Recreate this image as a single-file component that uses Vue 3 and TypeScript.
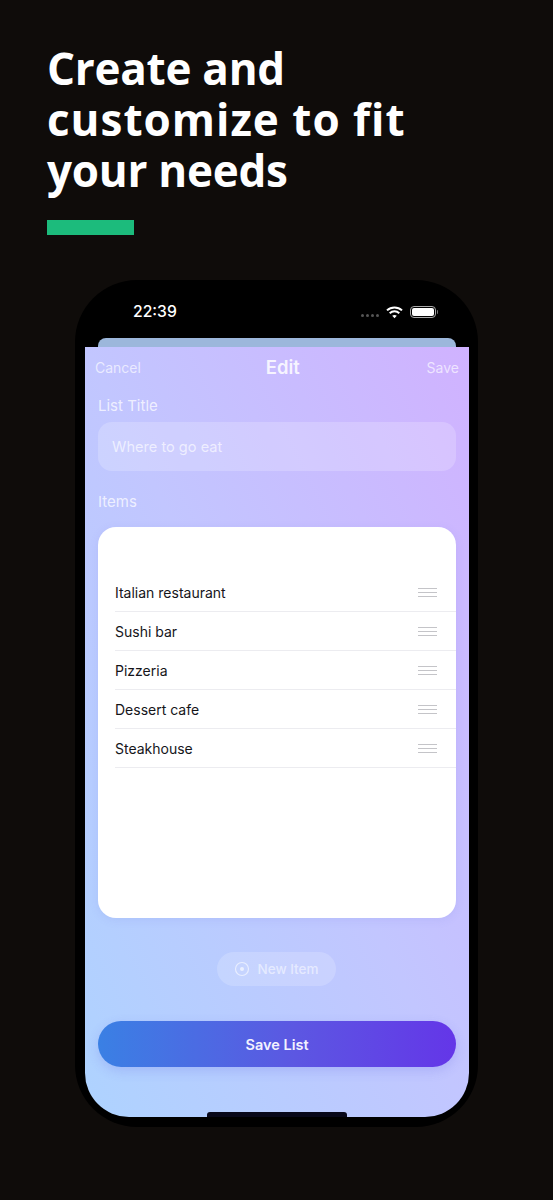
<script setup lang="ts">
const items: string[] = ['Italian restaurant', 'Sushi bar', 'Pizzeria', 'Dessert cafe', 'Steakhouse']
</script>

<template>
  <main class="page">
    <header class="intro">
      <h1 class="headline">
        <span class="line tight">Create and</span>
        <span class="line wide">customize to fit</span>
        <span class="line tight">your needs</span>
      </h1>
      <div class="accent"></div>
    </header>

    <section class="phone">
      <div class="status">
        <span class="time">22:39</span>
        <div class="status-icons">
          <span class="signal"><i></i><i></i><i></i><i></i></span>
          <svg class="wifi" width="17" height="13" viewBox="0 0 17 13" fill="none">
            <path d="M1 4.4C5.2 .4 11.8 .4 16 4.4" stroke="#fff" stroke-width="2" />
            <path d="M3.7 7.2C6.4 4.7 10.6 4.7 13.3 7.2" stroke="#fff" stroke-width="2" />
            <path d="M6.2 9.7 8.5 12.2 10.8 9.7C9.5 8.6 7.5 8.6 6.2 9.7Z" fill="#fff" />
          </svg>
          <span class="battery"><b></b></span>
        </div>
      </div>
      <div class="back-sheet"></div>

      <div class="screen">
        <nav class="nav">
          <span class="nav-side">Cancel</span>
          <span class="nav-title">Edit</span>
          <span class="nav-side">Save</span>
        </nav>

        <div class="content">
          <label class="field-label title-label">List Title</label>
          <div class="input">Where to go eat</div>
          <label class="field-label items-label">Items</label>

          <div class="card">
            <div v-for="item in items" :key="item" class="row">
              <span>{{ item }}</span>
              <span class="grip"><i></i><i></i><i></i></span>
            </div>
          </div>

          <div class="new-wrap">
            <div class="new-item">
              <svg width="16" height="16" viewBox="0 0 16 16" fill="none">
                <circle cx="8" cy="8" r="6.5" stroke="rgba(255,255,255,.6)" stroke-width="1.2" />
                <circle cx="8" cy="8" r="2" fill="rgba(255,255,255,.65)" />
              </svg>
              <span>New Item</span>
            </div>
          </div>

          <button class="save" type="button">Save List</button>
        </div>
        <div class="home"></div>
      </div>
    </section>
  </main>
</template>

<style>
html, body { margin: 0; background: #0f0c0a; }
</style>

<style scoped>
.page {
  width: 553px;
  height: 1200px;
  background: #0f0c0a;
  overflow: hidden;
  font-family: Inter, "Liberation Sans", sans-serif;
}
.intro { padding: 43px 0 0 47px; }
.headline {
  margin: 0;
  color: #fff;
  font-family: "Open Sans", "Noto Sans", sans-serif;
  font-weight: 700;
  font-size: 44px;
  line-height: 51px;
}
.line { display: block; white-space: nowrap; }
.tight { letter-spacing: -.25px; }
.wide { letter-spacing: 1px; }
.accent {
  width: 87px;
  height: 15px;
  margin-top: 24px;
  background: #1cbb7c;
}
.phone {
  width: 403px;
  height: 847px;
  box-sizing: border-box;
  margin: 45px 0 0 75px;
  padding: 0 9px 10px 10px;
  background: #000;
  border-radius: 62px;
  display: flex;
  flex-direction: column;
}
.status {
  height: 58px;
  flex: none;
  display: flex;
  justify-content: space-between;
  align-items: flex-start;
  padding: 22px 33px 0 48px;
  box-sizing: border-box;
}
.time {
  color: #fff;
  font-size: 15.7px;
  font-weight: 500;
  line-height: 20px;
}
.status-icons {
  display: flex;
  align-items: center;
  gap: 7px;
  height: 20px;
}
.signal { display: flex; gap: 2px; margin-top: 6px; }
.signal i { width: 3px; height: 3px; border-radius: 50%; background: #555; }
.battery {
  width: 26px;
  height: 12px;
  box-sizing: border-box;
  border: 1px solid #aaa;
  border-radius: 4px;
  padding: 1px;
  display: block;
  position: relative;
}
.battery b { display: block; height: 100%; background: #fff; border-radius: 2px; }
.battery::after {
  content: "";
  position: absolute;
  right: -3px;
  top: 3px;
  width: 1.5px;
  height: 4px;
  background: #777;
  border-radius: 0 1px 1px 0;
}
.back-sheet {
  height: 9px;
  flex: none;
  margin: 0 13px;
  background: #9cb7db;
  border-radius: 8px 8px 0 0;
}
.screen {
  position: relative;
  height: 770px;
  flex: none;
  background: linear-gradient(to top right, #aed3ff 0%, #c2c6ff 50%, #d0b2ff 100%);
  border-radius: 0 0 44px 44px;
}
.nav {
  display: flex;
  justify-content: space-between;
  align-items: center;
  height: 40px;
  padding: 0 10px;
}
.nav-side { color: rgba(255, 255, 255, .66); font-size: 14px; }
.nav-title { color: rgba(255, 255, 255, .85); font-size: 18.5px; font-weight: 600; margin-left: -2px; }
.content { padding: 0 13px; }
.field-label {
  display: block;
  color: rgba(255, 255, 255, .74);
  font-size: 15px;
  font-weight: 400;
  line-height: 18px;
}
.title-label { margin-top: 10px; }
.input {
  height: 49px;
  margin-top: 7px;
  box-sizing: border-box;
  padding: 0 14px;
  display: flex;
  align-items: center;
  background: rgba(255, 255, 255, .2);
  border-radius: 14px;
  color: rgba(255, 255, 255, .66);
  font-size: 14.6px;
}
.items-label { margin-top: 22px; }
.card {
  height: 391px;
  margin-top: 16px;
  box-sizing: border-box;
  padding: 46px 0 0 17px;
  background: #fff;
  border-radius: 18px;
  box-shadow: 0 2px 8px rgba(120, 130, 220, .15);
}
.row {
  height: 39px;
  box-sizing: border-box;
  border-bottom: 1px solid #ececf0;
  padding-right: 19px;
  display: flex;
  justify-content: space-between;
  align-items: center;
  color: #15151a;
  font-size: 14px;
}
.grip { display: flex; flex-direction: column; gap: 3px; }
.grip i { display: block; width: 19px; height: 1px; background: #c4c4c8; }
.new-wrap { display: flex; justify-content: center; margin-top: 34px; }
.new-item {
  width: 119px;
  height: 34px;
  box-sizing: border-box;
  margin-left: -2px;
  display: flex;
  align-items: center;
  justify-content: center;
  gap: 8px;
  border-radius: 17px;
  background: rgba(255, 255, 255, .18);
  color: rgba(255, 255, 255, .55);
  font-size: 13.5px;
  font-weight: 500;
}
.save {
  display: block;
  width: 100%;
  height: 46px;
  margin-top: 35px;
  border: 0;
  border-radius: 23px;
  background: linear-gradient(90deg, #3a80e4 0%, #5c57e2 55%, #6436e8 100%);
  box-shadow: 0 4px 12px rgba(90, 90, 220, .2);
  color: #f2f2ff;
  font-family: inherit;
  font-size: 14.5px;
  font-weight: 600;
}
.home {
  position: absolute;
  left: 122px;
  bottom: 0;
  width: 140px;
  height: 5px;
  background: #08081a;
  border-radius: 3px 3px 0 0;
}
</style>
